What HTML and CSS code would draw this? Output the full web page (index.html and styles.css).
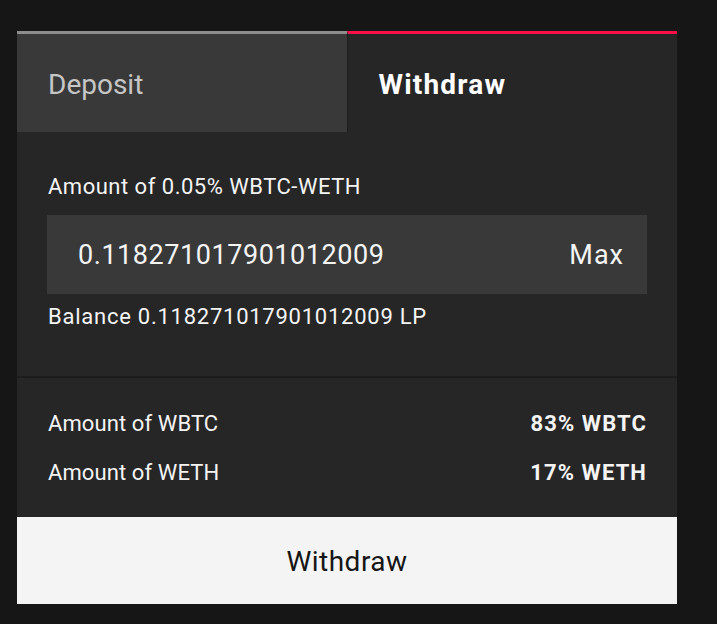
FILE: index.html
```html
<!DOCTYPE html>
<html lang="en">
<head>
<meta charset="utf-8">
<title>Withdraw</title>
<link rel="stylesheet" href="styles.css">
</head>
<body>
<div class="page">
  <div class="card">
    <div class="tabs">
      <div class="tab tab-inactive">Deposit</div>
      <div class="tab tab-active">Withdraw</div>
    </div>
    <div class="section section-input">
      <div class="label">Amount of 0.05% WBTC-WETH</div>
      <div class="input">
        <span class="value">0.118271017901012009</span>
        <span class="max">Max</span>
      </div>
      <div class="balance">Balance 0.118271017901012009 LP</div>
    </div>
    <div class="section section-amounts">
      <div class="row"><span>Amount of WBTC</span><span class="strong">83% WBTC</span></div>
      <div class="row"><span>Amount of WETH</span><span class="strong">17% WETH</span></div>
    </div>
    <div class="button">Withdraw</div>
  </div>
</div>
</body>
</html>
```

FILE: styles.css
```css
html, body {
  margin: 0;
  padding: 0;
  background: #161616;
  font-family: Roboto, "Noto Sans", sans-serif;
  color: #f4f4f4;
}
.page {
  padding: 31px 0 0 17px;
}
.card {
  width: 660px;
  background: #262626;
}
.tabs {
  display: flex;
}
.tab {
  flex: 1 1 0;
  height: 95px;
  padding-top: 3px;
  display: flex;
  align-items: center;
  padding-left: 31px;
  font-size: 28px;
  line-height: 32px;
  box-sizing: content-box;
}
.tab-inactive {
  background: #393939;
  border-top: 3px solid #8d8d8d;
  color: #c6c6c6;
}
.tab-active {
  background: #262626;
  border-top: 3px solid #fa0f49;
  border-left: 1px solid #1c1c1c;
  color: #ffffff;
  font-weight: 700;
  letter-spacing: 1.2px;
}
.section-input {
  padding: 43px 30px 47px;
  border-bottom: 2px solid #1c1c1c;
}
.label {
  font-size: 22px;
  line-height: 24px;
  letter-spacing: 0.5px;
  padding-left: 1px;
}
.input {
  margin-top: 16px;
  height: 79px;
  background: #393939;
  display: flex;
  align-items: center;
  justify-content: space-between;
  padding: 1px 23px 0 31px;
  box-sizing: border-box;
  font-size: 27px;
}
.value {
  letter-spacing: 0.55px;
}
.max {
  letter-spacing: 1px;
}
.balance {
  margin-top: 11px;
  font-size: 22px;
  line-height: 24px;
  letter-spacing: 0.75px;
  padding-left: 1px;
}
.section-amounts {
  padding: 34px 30px 32px 31px;
  display: flex;
  flex-direction: column;
  gap: 25px;
}
.row {
  display: flex;
  justify-content: space-between;
  font-size: 22px;
  line-height: 24px;
  letter-spacing: 0.1px;
}
.strong {
  font-weight: 700;
  letter-spacing: 1.1px;
}
.button {
  height: 85px;
  padding-top: 2px;
  background: #f4f4f4;
  color: #161616;
  display: flex;
  align-items: center;
  justify-content: center;
  font-size: 28px;
  letter-spacing: 0.5px;
}
```
